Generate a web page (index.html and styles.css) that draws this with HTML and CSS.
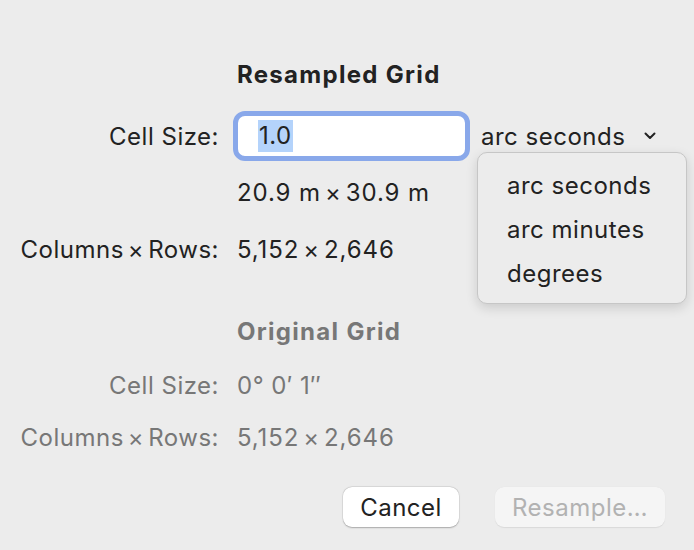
FILE: index.html
```html
<!DOCTYPE html>
<html>
<head>
<meta charset="utf-8">
<link rel="stylesheet" href="styles.css">
</head>
<body>
<div class="dialog">
  <div class="row heading"><div class="label"></div><div class="value">Resampled Grid</div></div>
  <div class="row r-cell">
    <div class="label">Cell Size:</div>
    <div class="value field-wrap">
      <div class="field"><span class="sel">1.0</span></div>
      <div class="popup">arc seconds
        <svg class="chev" width="12" height="8" viewBox="0 0 12 8"><path d="M1.5 1.5 L6 6 L10.5 1.5" fill="none" stroke="#222" stroke-width="2" stroke-linecap="round" stroke-linejoin="round"/></svg>
      </div>
    </div>
  </div>
  <div class="row r-dims"><div class="label"></div><div class="value num">20.9 m<span class="x">×</span>30.9 m</div></div>
  <div class="row r-cols"><div class="label">Columns<span class="x">×</span>Rows:</div><div class="value num">5,152<span class="x">×</span>2,646</div></div>
  <div class="row heading h2 dim"><div class="label"></div><div class="value">Original Grid</div></div>
  <div class="row r-ocell dim"><div class="label">Cell Size:</div><div class="value">0° 0′ 1″</div></div>
  <div class="row r-ocols dim"><div class="label">Columns<span class="x">×</span>Rows:</div><div class="value num">5,152<span class="x">×</span>2,646</div></div>
  <div class="buttons">
    <div class="btn cancel">Cancel</div>
    <div class="btn resample">Resample…</div>
  </div>
  <div class="menu">
    <div class="item">arc seconds</div>
    <div class="item">arc minutes</div>
    <div class="item">degrees</div>
  </div>
</div>
</body>
</html>
```
FILE: styles.css
```css
html, body {
  margin: 0;
  padding: 0;
  background: #ececec;
}
body {
  font-family: Inter, "Noto Sans", "Liberation Sans", sans-serif;
  font-size: 24px;
  letter-spacing: 0.5px;
  color: #222;
}
.dialog {
  position: relative;
  width: 694px;
  height: 550px;
  padding-top: 59px;
  box-sizing: border-box;
}
.row {
  display: flex;
  align-items: center;
  height: 30px;
}
.label {
  width: 219px;
  text-align: right;
  flex: none;
}
.x {
  margin: 0 4px;
}
.value {
  margin-left: 18px;
  white-space: nowrap;
}
.num {
  letter-spacing: 0.9px;
}
.heading {
  font-weight: 700;
  letter-spacing: 1.3px;
}
.r-cell {
  margin-top: 21px;
  height: 52px;
}
.r-cell .value {
  margin-left: 14px;
}
.field-wrap {
  display: flex;
  align-items: center;
}
.field {
  width: 207px;
  height: 40px;
  background: #fff;
  border: 5px solid #89a8ea;
  border-radius: 12px;
  display: flex;
  align-items: center;
  padding-left: 20px;
  box-sizing: content-box;
}
.sel {
  background: #b4d3fb;
  line-height: 32px;
  padding: 0 1px;
}
.popup {
  margin-left: 11px;
  display: flex;
  align-items: center;
}
.chev {
  margin-left: 19px;
}
.r-dims { margin-top: 15px; }
.r-cols { margin-top: 27px; }
.h2 { margin-top: 52px; }
.r-ocell { margin-top: 24px; }
.r-ocols { margin-top: 22px; }
.dim { color: #777; }
.buttons {
  display: flex;
  margin-top: 35px;
  padding-left: 343px;
  gap: 36px;
}
.btn {
  height: 40px;
  border-radius: 9px;
  display: flex;
  align-items: center;
  justify-content: center;
  box-sizing: border-box;
}
.cancel {
  width: 116px;
  background: #fff;
  box-shadow: 0 0.5px 1.5px rgba(0,0,0,0.25), 0 0 0 0.5px rgba(0,0,0,0.08);
  color: #222;
}
.resample {
  width: 170px;
  background: #f5f5f5;
  color: #b2b2b2;
  box-shadow: 0 0.5px 1px rgba(0,0,0,0.08);
}
.menu {
  position: absolute;
  left: 477px;
  top: 152px;
  width: 210px;
  height: 152px;
  box-sizing: border-box;
  background: #ececec;
  border: 1px solid #c6c6c6;
  border-radius: 10px;
  box-shadow: 0 4px 12px rgba(0,0,0,0.14);
  padding-top: 18px;
  padding-left: 29px;
}
.item {
  height: 44px;
  line-height: 30px;
}
```
